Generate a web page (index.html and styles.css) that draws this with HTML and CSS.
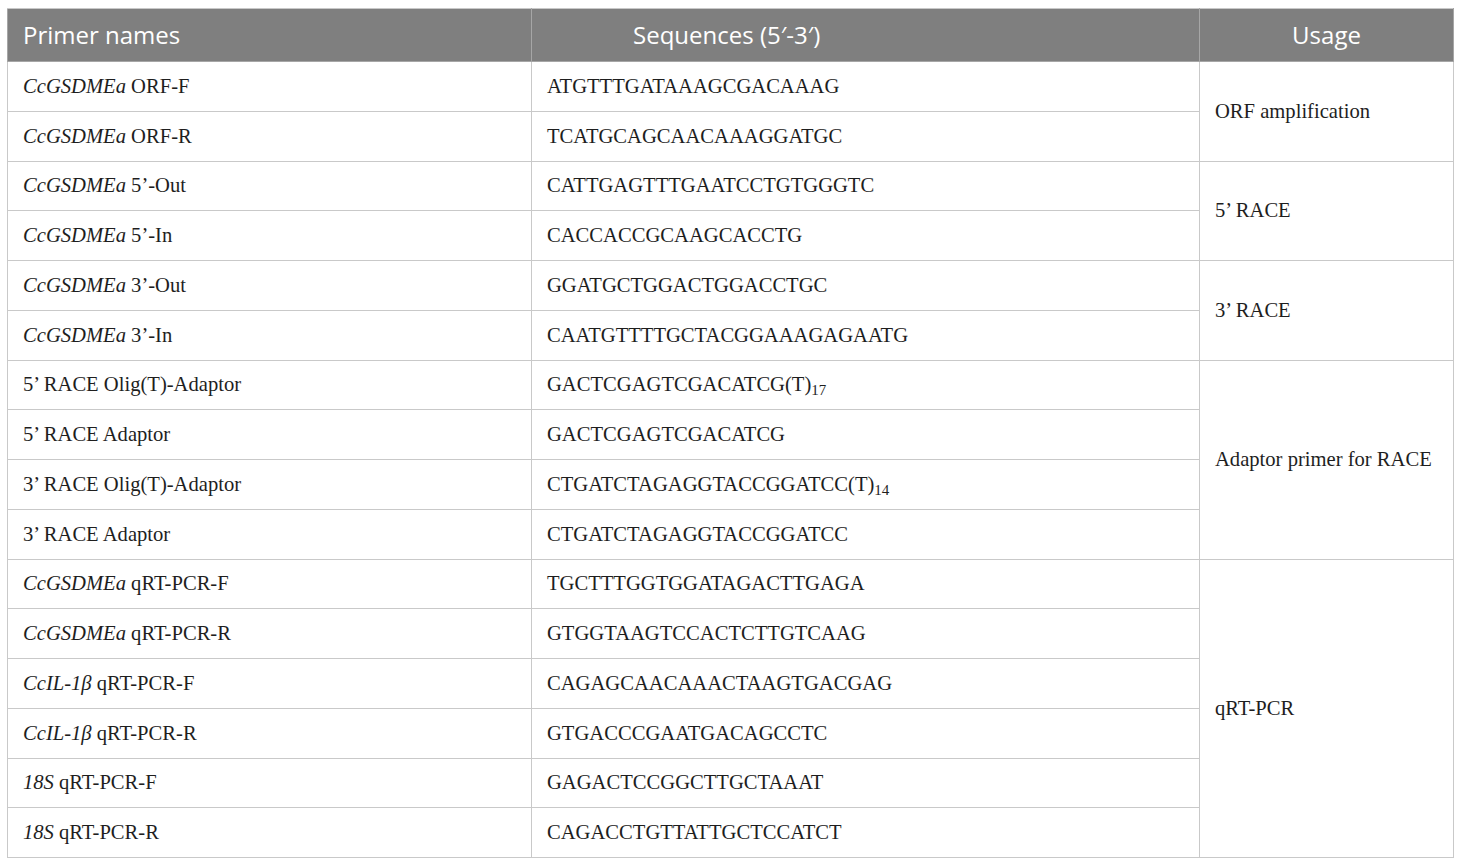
FILE: index.html
```html
<!DOCTYPE html>
<html>
<head>
<meta charset="utf-8">
<link rel="stylesheet" href="styles.css">
</head>
<body>
<table class="primers">
  <colgroup>
    <col class="c1"><col class="c2"><col class="c3">
  </colgroup>
  <thead>
    <tr>
      <th class="left">Primer names</th>
      <th class="seq">Sequences (5′-3′)</th>
      <th>Usage</th>
    </tr>
  </thead>
  <tbody>
    <tr><td><i>CcGSDMEa</i> ORF-F</td><td>ATGTTTGATAAAGCGACAAAG</td><td rowspan="2">ORF amplification</td></tr>
    <tr><td><i>CcGSDMEa</i> ORF-R</td><td>TCATGCAGCAACAAAGGATGC</td></tr>
    <tr><td><i>CcGSDMEa</i> 5’-Out</td><td>CATTGAGTTTGAATCCTGTGGGTC</td><td rowspan="2">5’ RACE</td></tr>
    <tr><td><i>CcGSDMEa</i> 5’-In</td><td>CACCACCGCAAGCACCTG</td></tr>
    <tr><td><i>CcGSDMEa</i> 3’-Out</td><td>GGATGCTGGACTGGACCTGC</td><td rowspan="2">3’ RACE</td></tr>
    <tr><td><i>CcGSDMEa</i> 3’-In</td><td>CAATGTTTTGCTACGGAAAGAGAATG</td></tr>
    <tr><td>5’ RACE Olig(T)-Adaptor</td><td>GACTCGAGTCGACATCG(T)<sub>17</sub></td><td rowspan="4">Adaptor primer for RACE</td></tr>
    <tr><td>5’ RACE Adaptor</td><td>GACTCGAGTCGACATCG</td></tr>
    <tr><td>3’ RACE Olig(T)-Adaptor</td><td>CTGATCTAGAGGTACCGGATCC(T)<sub>14</sub></td></tr>
    <tr><td>3’ RACE Adaptor</td><td>CTGATCTAGAGGTACCGGATCC</td></tr>
    <tr><td><i>CcGSDMEa</i> qRT-PCR-F</td><td>TGCTTTGGTGGATAGACTTGAGA</td><td rowspan="6">qRT-PCR</td></tr>
    <tr><td><i>CcGSDMEa</i> qRT-PCR-R</td><td>GTGGTAAGTCCACTCTTGTCAAG</td></tr>
    <tr><td><i>CcIL-1β</i> qRT-PCR-F</td><td>CAGAGCAACAAACTAAGTGACGAG</td></tr>
    <tr><td><i>CcIL-1β</i> qRT-PCR-R</td><td>GTGACCCGAATGACAGCCTC</td></tr>
    <tr><td><i>18S</i> qRT-PCR-F</td><td>GAGACTCCGGCTTGCTAAAT</td></tr>
    <tr><td><i>18S</i> qRT-PCR-R</td><td>CAGACCTGTTATTGCTCCATCT</td></tr>
  </tbody>
</table>
</body>
</html>
```
FILE: styles.css
```css
html, body {
  margin: 0;
  padding: 0;
  background: #ffffff;
}
body {
  padding: 8px 7px 0 7px;
}
.primers {
  border-collapse: collapse;
  table-layout: fixed;
  width: 1446px;
  font-family: "Liberation Serif", "Times New Roman", serif;
  font-size: 20.6px;
  color: #1e1e1e;
}
.c1 { width: 524px; }
.c2 { width: 668px; }
.c3 { width: 254px; }
.primers th {
  background: #7f7f7f;
  color: #ffffff;
  font-family: "Open Sans", "Noto Sans", sans-serif;
  font-weight: normal;
  font-size: 24px;
  height: 50px;
  padding: 0 15px 2px 15px;
  text-align: center;
  vertical-align: middle;
  border: 1px solid #a6a6a6;
  border-top-color: #c8c8c8;
}
.primers th.left {
  text-align: left;
}
.primers th.seq {
  text-align: left;
  padding-left: 101px;
}
.primers td {
  height: 48.75px;
  padding: 0 15px;
  border: 1px solid #c9c9c9;
  vertical-align: middle;
  text-align: left;
  white-space: nowrap;
}
.primers sub {
  font-size: 15px;
  vertical-align: -4px;
  line-height: 0;
}
```
